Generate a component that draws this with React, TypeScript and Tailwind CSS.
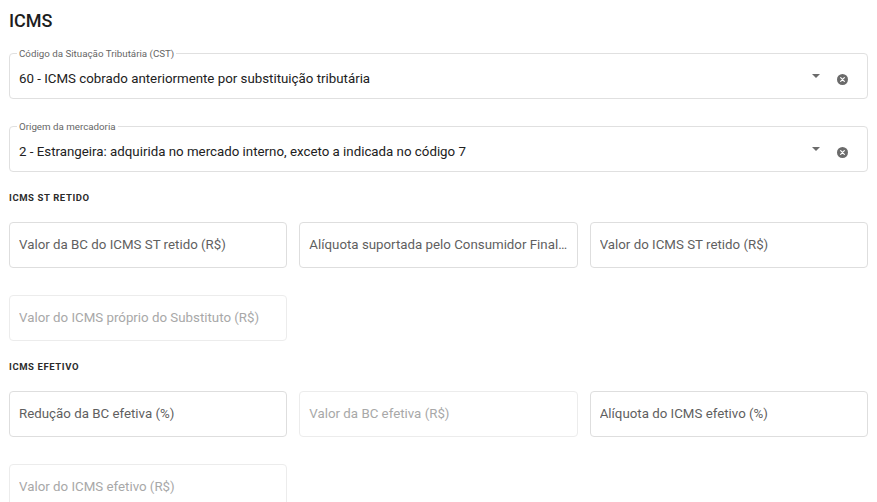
const font = { fontFamily: "Roboto, 'Noto Sans', Arial, sans-serif" };

type SelectProps = { label: string; value: string };

function ArrowDrop() {
  return (
    <svg width="8" height="4" viewBox="0 0 8 4" className="-translate-y-[3px]">
      <polygon points="0,0 8,0 4,4" fill="#6b6b6b" />
    </svg>
  );
}

function ClearIcon() {
  return (
    <svg width="11" height="11" viewBox="0 0 24 24">
      <circle cx="12" cy="12" r="12" fill="#6b6b6b" />
      <path d="M8 8l8 8M16 8l-8 8" stroke="#fff" strokeWidth="2.6" strokeLinecap="round" />
    </svg>
  );
}

function OutlinedSelect({ label, value }: SelectProps) {
  return (
    <div className="relative flex h-[46px] items-center rounded-[4px] border border-[#e0e0e0] pl-[9px] pr-[19px] pt-[6px]">
      <span className="absolute -top-[6px] left-[7px] bg-white px-[2px] text-[9.75px] leading-[11px] text-[#666]">
        {label}
      </span>
      <div className="min-w-0 flex-1 truncate text-[13.3px] text-[#212121]">{value}</div>
      <div className="flex items-center gap-[17px]">
        <ArrowDrop />
        <ClearIcon />
      </div>
    </div>
  );
}

function TextField({ placeholder, disabled }: { placeholder: string; disabled?: boolean }) {
  return (
    <div
      className={`flex h-[46px] items-center rounded-[4px] border px-[9px] ${
        disabled ? "border-[#ececec]" : "border-[#dedede]"
      }`}
    >
      <div
        className={`min-w-0 flex-1 truncate text-[13.3px] ${
          disabled ? "text-[#a8a8a8]" : "text-[#5f5f5f]"
        }`}
      >
        {placeholder}
      </div>
    </div>
  );
}

function SectionTitle({ children }: { children: string }) {
  return (
    <div className="mb-[17px] mt-[19px] text-[9.5px] font-bold uppercase leading-[14px] tracking-[0.6px] text-[#2b2b2b]">
      {children}
    </div>
  );
}

export default function App() {
  return (
    <div className="min-h-[502px] bg-white px-[9px] pt-[7px]" style={font}>
      <h1 className="text-[18px] font-medium leading-[28px] text-[#1d1d1d]">ICMS</h1>

      <div className="mt-[18px] flex flex-col gap-[27px]">
        <OutlinedSelect
          label="Código da Situação Tributária (CST)"
          value="60 - ICMS cobrado anteriormente por substituição tributária"
        />
        <OutlinedSelect
          label="Origem da mercadoria"
          value="2 - Estrangeira: adquirida no mercado interno, exceto a indicada no código 7"
        />
      </div>

      <SectionTitle>ICMS ST Retido</SectionTitle>
      <div className="grid grid-cols-3 gap-x-[12px] gap-y-[27px]">
        <TextField placeholder="Valor da BC do ICMS ST retido (R$)" />
        <TextField placeholder="Alíquota suportada pelo Consumidor Final (%)" />
        <TextField placeholder="Valor do ICMS ST retido (R$)" />
        <TextField placeholder="Valor do ICMS próprio do Substituto (R$)" disabled />
      </div>

      <SectionTitle>ICMS Efetivo</SectionTitle>
      <div className="grid grid-cols-3 gap-x-[12px] gap-y-[27px]">
        <TextField placeholder="Redução da BC efetiva (%)" />
        <TextField placeholder="Valor da BC efetiva (R$)" disabled />
        <TextField placeholder="Alíquota do ICMS efetivo (%)" />
        <TextField placeholder="Valor do ICMS efetivo (R$)" disabled />
      </div>
    </div>
  );
}
